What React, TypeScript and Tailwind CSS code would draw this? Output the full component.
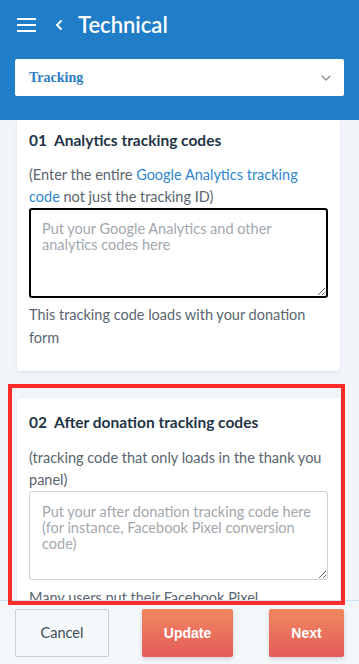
import { ChevronDown, ChevronLeft } from "lucide-react";

const font = { fontFamily: "Lato, 'Open Sans', sans-serif" };
const arial = { fontFamily: "'Liberation Sans', Arial, sans-serif" };

export default function App() {
  return (
    <div
      className="relative flex h-[664px] w-[359px] flex-col overflow-hidden bg-[#f1f5f9] text-[#4a5561]"
      style={font}
    >
      {/* header */}
      <header className="h-[120px] shrink-0 bg-[#1f7ec7] px-[15px]">
        <div className="flex h-[50px] items-center">
          <div className="ml-[2px] flex w-[19px] flex-col gap-[4px]">
            <span className="h-[2px] w-[19px] bg-white" />
            <span className="h-[2px] w-[19px] bg-white" />
            <span className="h-[2px] w-[19px] bg-white" />
          </div>
          <ChevronLeft className="ml-[15px] h-[16px] w-[16px] text-white" strokeWidth={3} />
          <h1 className="ml-[11px] text-[22px] font-semibold leading-none text-white">Technical</h1>
        </div>
        <div className="mt-[9px] flex h-[37px] items-center justify-between rounded-[2px] bg-white pl-[14px] pr-[10px]">
          <span
            className="text-[14px] font-bold text-[#2b7cc6]"
            style={{ fontFamily: "'Liberation Serif', serif" }}
          >
            Tracking
          </span>
          <ChevronDown className="h-[16px] w-[16px] text-[#8a939c]" strokeWidth={2} />
        </div>
      </header>

      {/* scroll area */}
      <main className="flex-1 overflow-hidden pl-[17px] pr-[19px]">
        <section className="h-[251px] rounded-b-[3px] bg-white px-[12px] pt-[9px] shadow-[0_1px_3px_rgba(30,60,90,0.12)]">
          <h2 className="text-[15.5px] font-bold text-[#1f3447]">01&nbsp;&nbsp;Analytics tracking codes</h2>
          <p className="mt-[12px] text-[14.5px] leading-[22px] text-[#5a6570]">
            (Enter the entire <span className="text-[#2e87cf]">Google Analytics tracking code</span> not just the
            tracking ID)
          </p>
          <textarea
            className="block h-[90px] w-full resize-y rounded-[3px] border-2 border-black px-[11px] pt-[11px] text-[14.5px] leading-[16px] outline-none placeholder:text-[#a2a8ae]"
            placeholder="Put your Google Analytics and other analytics codes here"
          />
          <p className="mt-[5px] text-[14.5px] leading-[23px] text-[#5a6570]">
            This tracking code loads with your donation form
          </p>
        </section>

        <section className="mt-[27px] h-[220px] rounded-[3px] bg-white px-[12px] pt-[13px] shadow-[0_1px_3px_rgba(30,60,90,0.12)]">
          <h2 className="text-[15.5px] font-bold text-[#1f3447]">02&nbsp;&nbsp;After donation tracking codes</h2>
          <p className="mt-[13px] text-[14.5px] leading-[22px] text-[#5a6570]">
            (tracking code that only loads in the thank you panel)
          </p>
          <textarea
            className="block h-[89px] w-full resize-y rounded-[3px] border border-[#c9d3dd] px-[12px] pt-[12px] text-[14.5px] leading-[16px] outline-none placeholder:text-[#a2a8ae]"
            placeholder="Put your after donation tracking code here (for instance, Facebook Pixel conversion code)"
          />
          <p className="mt-[7px] text-[14.5px] leading-[22px] text-[#5a6570]">
            Many users put their Facebook Pixel
          </p>
        </section>
      </main>

      {/* footer */}
      <footer className="flex h-[64px] shrink-0 items-start justify-between border-t border-[#cfe0ee] bg-[#f4f7fa] px-[15px] pt-[8px]">
        <button className="h-[48px] w-[94px] rounded-[2px] border border-[#c8d1da] bg-[#f5f8fb] text-[14.5px] text-[#3d4b58]">
          Cancel
        </button>
        <button
          className="ml-[33px] h-[48px] w-[91px] rounded-[2px] bg-gradient-to-b from-[#f0875f] to-[#e45b5b] text-[14px] font-bold text-white shadow-[0_2px_4px_rgba(0,0,0,0.15)]"
          style={arial}
        >
          Update
        </button>
        <button
          className="ml-auto h-[48px] w-[75px] rounded-[2px] bg-gradient-to-b from-[#f0875f] to-[#e45b5b] text-[14px] font-bold text-white shadow-[0_2px_4px_rgba(0,0,0,0.15)]"
          style={arial}
        >
          Next
        </button>
      </footer>

      {/* annotation box */}
      <div className="pointer-events-none absolute left-[8px] top-[384px] h-[221px] w-[337px] border-4 border-[#ff2a2a]" />
    </div>
  );
}
